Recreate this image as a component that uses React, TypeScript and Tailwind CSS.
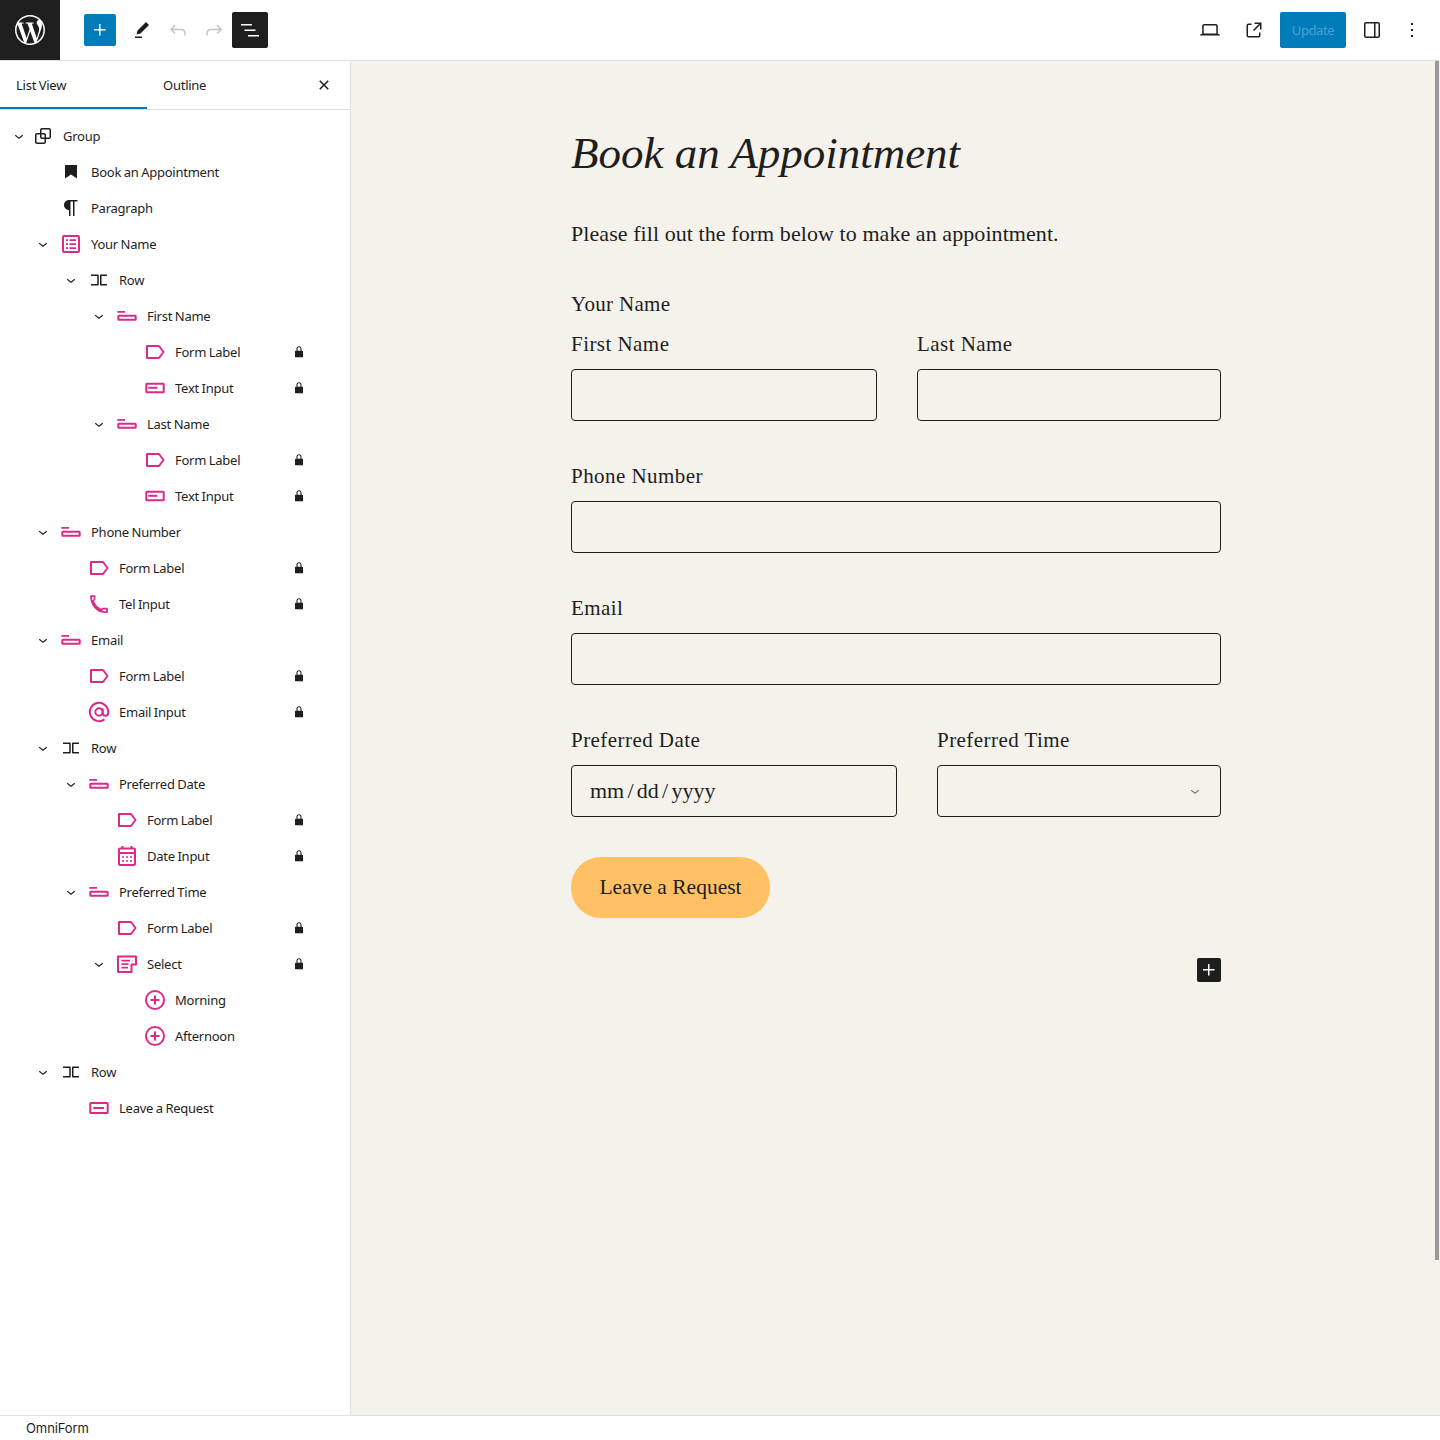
import { SiWordpress } from "react-icons/si";

const pink = "#de2a87";

const I = ({ d, className = "w-6 h-6" }: { d: string; className?: string }) => (
  <svg viewBox="0 0 24 24" fill="currentColor" className={className}>
    <path d={d} />
  </svg>
);

const paths = {
  plus: "M11 12.5V17.5H12.5V12.5H17.5V11H12.5V6H11V11H6V12.5H11Z",
  edit: "m19 7-3-3-8.5 8.5-1 4 4-1L19 7Zm-7 11.5H5V20h7v-1.5Z",
  undo: "M18.3 11.7c-.6-.6-1.4-.9-2.3-.9H6.7l2.9-3.3-1.1-1-4.5 5L8.5 16l1-1-2.7-2.7H16c.5 0 .9.2 1.3.5 1 1 1 3.4 1 4.5v.3h1.5v-.2c0-1.5 0-4.3-1.5-5.7z",
  redo: "M15.6 6.5l-1.1 1 2.9 3.3H8c-.9 0-1.7.3-2.3.9-1.4 1.5-1.4 4.2-1.4 5.6v.2h1.5v-.3c0-1.1 0-3.5 1-4.5.3-.3.7-.5 1.3-.5h9.2L14.5 15l1.1 1.1 4.6-4.6-4.6-5z",
  listView: "M3 6h11v1.5H3V6Zm3.5 5.5h11V13h-11v-1.5ZM21 17H10v1.5h11V17Z",
  desktop: "M20.5 16h-.7V8c0-1.1-.9-2-2-2H6.2c-1.1 0-2 .9-2 2v8h-.7c-.8 0-1.5.7-1.5 1.5h20c0-.8-.7-1.5-1.5-1.5zM5.7 8c0-.3.2-.5.5-.5h11.6c.3 0 .5.2.5.5v7.6H5.7V8z",
  external: "M19.5 4.5h-7V6h4.44l-5.97 5.97 1.06 1.06L18 7.06v4.44h1.5v-7Zm-13 1a2 2 0 0 0-2 2v10a2 2 0 0 0 2 2h10a2 2 0 0 0 2-2v-3H17v3a.5.5 0 0 1-.5.5h-10a.5.5 0 0 1-.5-.5v-10a.5.5 0 0 1 .5-.5h3V5.5h-3Z",
  drawer: "M18 4H6c-1.1 0-2 .9-2 2v12c0 1.1.9 2 2 2h12c1.1 0 2-.9 2-2V6c0-1.1-.9-2-2-2zm-4 14.5H6c-.3 0-.5-.2-.5-.5V6c0-.3.2-.5.5-.5h8v13zm4.5-.5c0 .3-.2.5-.5.5h-2.5v-13H18c.3 0 .5.2.5.5v12z",
  more: "M13 19h-2v-2h2v2zm0-6h-2v-2h2v2zm0-6h-2V5h2v2z",
  close: "M12 13.06l3.712 3.713 1.061-1.06L13.061 12l3.712-3.712-1.06-1.06L12 10.938 8.288 7.227l-1.061 1.06L10.939 12l-3.712 3.712 1.06 1.061L12 13.061z",
  chevron: "M17.5 11.6L12 16l-5.5-4.4.9-1.2L12 14l4.5-3.6 1 1.2z",
  lock: "M17 10h-1.2V7c0-2.1-1.7-3.8-3.8-3.8-2.1 0-3.8 1.7-3.8 3.8v3H7c-.6 0-1 .4-1 1v8c0 .6.4 1 1 1h10c.6 0 1-.4 1-1v-8c0-.6-.4-1-1-1zm-2.8 0H9.8V7c0-1.2 1-2.2 2.2-2.2s2.2 1 2.2 2.2v3z",
  group: "M18 4h-7c-1.1 0-2 .9-2 2v3H6c-1.1 0-2 .9-2 2v7c0 1.1.9 2 2 2h7c1.1 0 2-.9 2-2v-3h3c1.1 0 2-.9 2-2V6c0-1.1-.9-2-2-2zm-4.5 14c0 .3-.2.5-.5.5H6c-.3 0-.5-.2-.5-.5v-7c0-.3.2-.5.5-.5h3V13c0 1.1.9 2 2 2h2.5v3zm0-4.5H11c-.3 0-.5-.2-.5-.5v-2.5H13c.3 0 .5.2.5.5v2.5zm5-.5c0 .3-.2.5-.5.5h-3V11c0-1.1-.9-2-2-2h-2.5V6c0-.3.2-.5.5-.5h7c.3 0 .5.2.5.5v7z",
  bookmark: "M6 5h12v13.500l-6-4-6 4z",
  paragraph: "m9.99609 14v-.2251l.00391.0001v6.225h1.5v-14.5h2.5v14.5h1.5v-14.5h3v-1.5h-8.50391c-2.76142 0-5 2.23858-5 5 0 2.7614 2.23858 5 5 5z",
};

const Stroke = ({ children, color = pink, width = 2 }: { children: React.ReactNode; color?: string; width?: number }) => (
  <svg viewBox="0 0 24 24" fill="none" stroke={color} strokeWidth={width} strokeLinejoin="round" className="w-6 h-6">
    {children}
  </svg>
);

const icons: Record<string, React.ReactNode> = {
  group: <I d={paths.group} className="w-6 h-6 text-[#1e1e1e]" />,
  bookmark: <I d={paths.bookmark} className="w-6 h-6 text-[#1e1e1e]" />,
  paragraph: <I d={paths.paragraph} className="w-6 h-6 text-[#1e1e1e]" />,
  row: (
    <Stroke color="#1e1e1e" width={1.5}>
      <path d="M4 7.250h7v9.500H4M20 7.250h-6.250v9.500H20" />
    </Stroke>
  ),
  form: (
    <Stroke>
      <rect x="4" y="4" width="16" height="16" rx="1" />
      <path d="M7 8h2M10.500 8H17M7 12h2M10.500 12H17M7 16h2M10.500 16H17" strokeWidth="1.750" />
    </Stroke>
  ),
  field: (
    <Stroke>
      <path d="M2.300 7.900H10" strokeWidth="1.750" />
      <rect x="3.300" y="11.700" width="17.400" height="4" rx="0.500" />
    </Stroke>
  ),
  label: (
    <Stroke>
      <path d="M4 6h12l4.500 6-4.500 6H4z" />
    </Stroke>
  ),
  text: (
    <Stroke>
      <rect x="3.300" y="7.700" width="17.400" height="8.600" rx="0.500" />
      <path d="M5.300 11.800h9" />
    </Stroke>
  ),
  tel: (
    <Stroke width={1.750}>
      <path d="M4 4h3.500v3.500L6 9c1.500 4.500 4 7 8.500 8.800L16 16.500h4V20h-3C10 19.500 4 13 4 4z" />
    </Stroke>
  ),
  email: (
    <span className="mx-px block w-[22px]">
      <svg viewBox="0 0 24 24" fill="none" stroke={pink} strokeWidth="2.200" className="h-[22px] w-[22px]">
        <circle cx="12" cy="12" r="4" />
        <path d="M16 8v5a3 3 0 0 0 6 0v-1a10 10 0 1 0-4 8" />
      </svg>
    </span>
  ),
  date: (
    <Stroke>
      <rect x="4" y="4.500" width="16" height="16.500" rx="1" />
      <path d="M4 9h16M7.500 2v3M16.500 2v3" />
      <path d="M7 13h2M11 13h2M15 13h2M7 17h2M11 17h2M15 17h2" strokeWidth="1.500" />
    </Stroke>
  ),
  select: (
    <Stroke>
      <path d="M3 4.500h18v8h-4.500v7.500H3z" />
      <path d="M6.500 8.500h8.500M17.500 8.500h.500M6.500 12h7M6.500 15.500h6.500" strokeWidth="1.750" />
    </Stroke>
  ),
  option: (
    <Stroke>
      <circle cx="12" cy="12" r="9" />
      <path d="M12 7.500v9M7.500 12h9" />
    </Stroke>
  ),
  button: (
    <Stroke>
      <rect x="3.300" y="7" width="17.400" height="10" rx="0.500" />
      <path d="M6.300 12H17" />
    </Stroke>
  ),
};

const indents = ["pl-[11px]", "pl-[35px]", "pl-[63px]", "pl-[91px]", "pl-[119px]"];

type Item = { depth: number; icon: string; label: string; open?: boolean; locked?: boolean };

const items: Item[] = [
  { depth: 0, icon: "group", label: "Group", open: true },
  { depth: 1, icon: "bookmark", label: "Book an Appointment" },
  { depth: 1, icon: "paragraph", label: "Paragraph" },
  { depth: 1, icon: "form", label: "Your Name", open: true },
  { depth: 2, icon: "row", label: "Row", open: true },
  { depth: 3, icon: "field", label: "First Name", open: true },
  { depth: 4, icon: "label", label: "Form Label", locked: true },
  { depth: 4, icon: "text", label: "Text Input", locked: true },
  { depth: 3, icon: "field", label: "Last Name", open: true },
  { depth: 4, icon: "label", label: "Form Label", locked: true },
  { depth: 4, icon: "text", label: "Text Input", locked: true },
  { depth: 1, icon: "field", label: "Phone Number", open: true },
  { depth: 2, icon: "label", label: "Form Label", locked: true },
  { depth: 2, icon: "tel", label: "Tel Input", locked: true },
  { depth: 1, icon: "field", label: "Email", open: true },
  { depth: 2, icon: "label", label: "Form Label", locked: true },
  { depth: 2, icon: "email", label: "Email Input", locked: true },
  { depth: 1, icon: "row", label: "Row", open: true },
  { depth: 2, icon: "field", label: "Preferred Date", open: true },
  { depth: 3, icon: "label", label: "Form Label", locked: true },
  { depth: 3, icon: "date", label: "Date Input", locked: true },
  { depth: 2, icon: "field", label: "Preferred Time", open: true },
  { depth: 3, icon: "label", label: "Form Label", locked: true },
  { depth: 3, icon: "select", label: "Select", open: true, locked: true },
  { depth: 4, icon: "option", label: "Morning" },
  { depth: 4, icon: "option", label: "Afternoon" },
  { depth: 1, icon: "row", label: "Row", open: true },
  { depth: 2, icon: "button", label: "Leave a Request" },
];

function ListRow({ item }: { item: Item }) {
  return (
    <div className={`relative flex h-9 items-center ${indents[item.depth]}`}>
      <span className="flex w-4 justify-center text-[#1e1e1e]">
        {item.open && <I d={paths.chevron} className="h-[18px] w-[18px] shrink-0" />}
      </span>
      <span className={`${item.depth === 0 ? "ml-1" : "ml-2"} mr-2 flex`}>{icons[item.icon]}</span>
      <span className="pt-[2px] text-[13px] tracking-[-0.25px] text-[#1e1e1e] [word-spacing:-0.5px]">{item.label}</span>
      {item.locked && <I d={paths.lock} className="absolute left-[291px] h-4 w-4 text-[#1e1e1e]" />}
    </div>
  );
}

function Field({ label, className = "", children }: { label: string; className?: string; children?: React.ReactNode }) {
  return (
    <div className={className}>
      <div className="text-[21px] leading-8 tracking-[0.45px]">{label}</div>
      <div className="mt-[9px] flex h-[52px] items-center rounded-[4px] border border-[#1e1e1e]">{children}</div>
    </div>
  );
}

export default function App() {
  return (
    <div className="flex h-[1440px] flex-col overflow-hidden bg-white font-['Noto_Sans',sans-serif]">
      <header className="flex h-[61px] shrink-0 items-center border-b border-[#e0e0e0] bg-white text-[#1e1e1e]">
        <div className="flex h-[60px] w-[60px] items-center justify-center bg-[#1e1e1e]">
          <SiWordpress className="h-[30px] w-[30px] text-white" />
        </div>
        <button className="ml-6 flex h-8 w-8 items-center justify-center rounded-[2px] bg-[#007cba] text-white">
          <I d={paths.plus} />
        </button>
        <button className="ml-2 flex h-9 w-9 items-center justify-center">
          <I d={paths.edit} />
        </button>
        <button className="flex h-9 w-9 items-center justify-center text-[#c4c4c4]">
          <I d={paths.undo} />
        </button>
        <button className="flex h-9 w-9 items-center justify-center text-[#c4c4c4]">
          <I d={paths.redo} />
        </button>
        <button className="flex h-9 w-9 items-center justify-center rounded-[2px] bg-[#1e1e1e] text-white">
          <I d={paths.listView} />
        </button>
        <div className="ml-auto mr-[10px] flex items-center">
          <button className="flex h-9 w-9 items-center justify-center">
            <I d={paths.desktop} />
          </button>
          <button className="ml-2 flex h-9 w-9 items-center justify-center">
            <I d={paths.external} />
          </button>
          <button className="ml-2 flex h-9 w-[66px] items-center justify-center rounded-[2px] bg-[#007cba] pt-[2px] text-[13px] tracking-[-0.4px] text-white/30">
            Update
          </button>
          <button className="ml-2 flex h-9 w-9 items-center justify-center">
            <I d={paths.drawer} />
          </button>
          <button className="ml-1 flex h-9 w-9 items-center justify-center">
            <I d={paths.more} />
          </button>
        </div>
      </header>

      <div className="flex min-h-0 flex-1">
        <aside className="w-[351px] shrink-0 border-r border-[#e0e0e0] bg-white">
          <div className="flex h-[49px] items-stretch border-b border-[#e0e0e0] text-[13px] tracking-[-0.25px] text-[#1e1e1e] [word-spacing:-0.5px]">
            <div className="flex w-[147px] items-center pt-[2px] pl-4 shadow-[inset_0_-2px_0_#007cba]">List View</div>
            <div className="flex w-[147px] items-center pt-[2px] pl-4">Outline</div>
            <button className="ml-[18px] flex w-6 items-center justify-center">
              <I d={paths.close} />
            </button>
          </div>
          <div className="pt-2">
            {items.map((item, i) => (
              <ListRow key={i} item={item} />
            ))}
          </div>
        </aside>

        <main className="relative flex-1 bg-[#f5f2ec] pl-[220px] font-['Liberation_Serif',serif] text-[#1e1e1e]">
          <div className="w-[650px] pt-16">
            <h1 className="text-[45px] leading-14 font-normal italic">Book an Appointment</h1>
            <p className="mt-[37px] text-[22px] leading-8 tracking-[0.07px]">Please fill out the form below to make an appointment.</p>
            <div className="mt-[38px] text-[21px] leading-8 tracking-[0.33px]">Your Name</div>
            <div className="mt-2 flex gap-10">
              <Field label="First Name" className="w-[306px]" />
              <Field label="Last Name" className="w-[304px]" />
            </div>
            <Field label="Phone Number" className="mt-[39px]" />
            <Field label="Email" className="mt-[39px]" />
            <div className="mt-[39px] flex gap-10">
              <Field label="Preferred Date" className="w-[326px]">
                <span className="pb-[2px] pl-[18px] text-[22px] [word-spacing:-2.25px]">mm / dd / yyyy</span>
              </Field>
              <Field label="Preferred Time" className="w-[284px]">
                <I d={paths.chevron} className="ml-auto mr-[16px] h-[18px] w-[18px] text-[#757575]" />
              </Field>
            </div>
            <button className="mt-10 h-[61px] w-[199px] rounded-[30px] bg-[#ffc164] text-[21.5px]">Leave a Request</button>
            <button className="mt-10 ml-auto flex h-6 w-6 items-center justify-center rounded-[2px] bg-[#1e1e1e] text-white">
              <I d={paths.plus} />
            </button>
          </div>
          <div className="absolute top-0 right-px h-[1199px] w-1 bg-[#999999]" />
        </main>
      </div>

      <footer className="flex h-[25px] shrink-0 items-center border-t border-[#e0e0e0] bg-white pt-[2px] pl-[26px] font-['Inter',sans-serif] text-[13px] tracking-[-0.1px] text-[#1e1e1e]">
        OmniForm
      </footer>
    </div>
  );
}
